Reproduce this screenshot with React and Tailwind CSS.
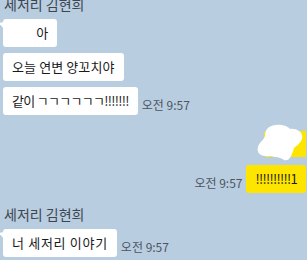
const font = { fontFamily: '"Noto Sans CJK KR", "Malgun Gothic", sans-serif' };

const Tail = ({ color = '#ffffff', side = 'left' }) => (
  <svg
    width="5"
    height="7"
    viewBox="0 0 5 7"
    className={side === 'left' ? 'absolute -left-[4px] top-[3px]' : 'absolute -right-[4px] top-[3px]'}
  >
    {side === 'left' ? (
      <path d="M5 0 L0 1 L5 7 Z" fill={color} />
    ) : (
      <path d="M0 0 L5 1 L0 7 Z" fill={color} />
    )}
  </svg>
);

const Bubble = ({ children, tail, yellow, className = 'tracking-[0.1px]' }) => (
  <div
    className={`relative h-[28px] rounded-[3px] px-[9px] flex items-center text-[13px] text-[#1a1a1a] whitespace-nowrap ${className} ${
      yellow ? 'bg-[#fee500]' : 'bg-white'
    }`}
  >
    {tail && <Tail color={yellow ? '#fee500' : '#ffffff'} side={yellow ? 'right' : 'left'} />}
    {children}
  </div>
);

const Time = () => (
  <span className="text-[12px] text-[#4d5560] leading-none mb-[4px] whitespace-nowrap">
    오전 9:57
  </span>
);

const Name = ({ className = '' }) => (
  <div className={`text-[14px] text-[#3d4650] leading-none pl-[4px] ${className}`}>
    세저리 김현희
  </div>
);

export default function App() {
  return (
    <div className="w-[307px] h-[260px] bg-[#b9cde0] overflow-hidden flex flex-col" style={font}>
      {/* received */}
      <Name className="-mt-[3px]" />
      <div className="flex flex-col items-start gap-[6px] pl-[3px] mt-[8px]">
        <Bubble tail>
          <span className="text-white">ㅇㅇ</span>아
        </Bubble>
        <Bubble>오늘 연변 양꼬치야</Bubble>
        <div className="flex items-end gap-[4px]">
          <Bubble className="tracking-[-0.7px]">같이 ㄱㄱㄱㄱㄱㄱ!!!!!!!</Bubble>
          <Time />
        </div>
      </div>

      {/* sent */}
      <div className="flex flex-col items-end gap-[8px] pr-[1px] mt-[16px]">
        <div className="relative">
          <div className="w-[42px] h-[26px] bg-[#fee500] rounded-l-[3px]" />
          <svg width="50" height="38" viewBox="0 0 50 38" className="absolute -left-[8px] -top-[7px]">
            <path
              d="M12 4 C18 -1 30 0 34 5 C40 4 48 8 46 15 C44 20 40 22 38 24 C36 30 34 38 28 36 C24 33 20 33 14 32 C6 33 0 30 2 23 C3 18 8 16 9 12 C9 8 10 6 12 4 Z"
              fill="#ffffff"
            />
          </svg>
        </div>
        <div className="flex items-end gap-[4px]">
          <Time />
          <Bubble yellow className="tracking-[-0.7px]">!!!!!!!!!!1</Bubble>
        </div>
      </div>

      {/* received */}
      <Name className="mt-[14px]" />
      <div className="flex flex-col items-start pl-[3px] mt-[8px]">
        <div className="flex items-end gap-[4px]">
          <Bubble tail className="tracking-[0.7px]">너 세저리 이야기</Bubble>
          <Time />
        </div>
      </div>
    </div>
  );
}
